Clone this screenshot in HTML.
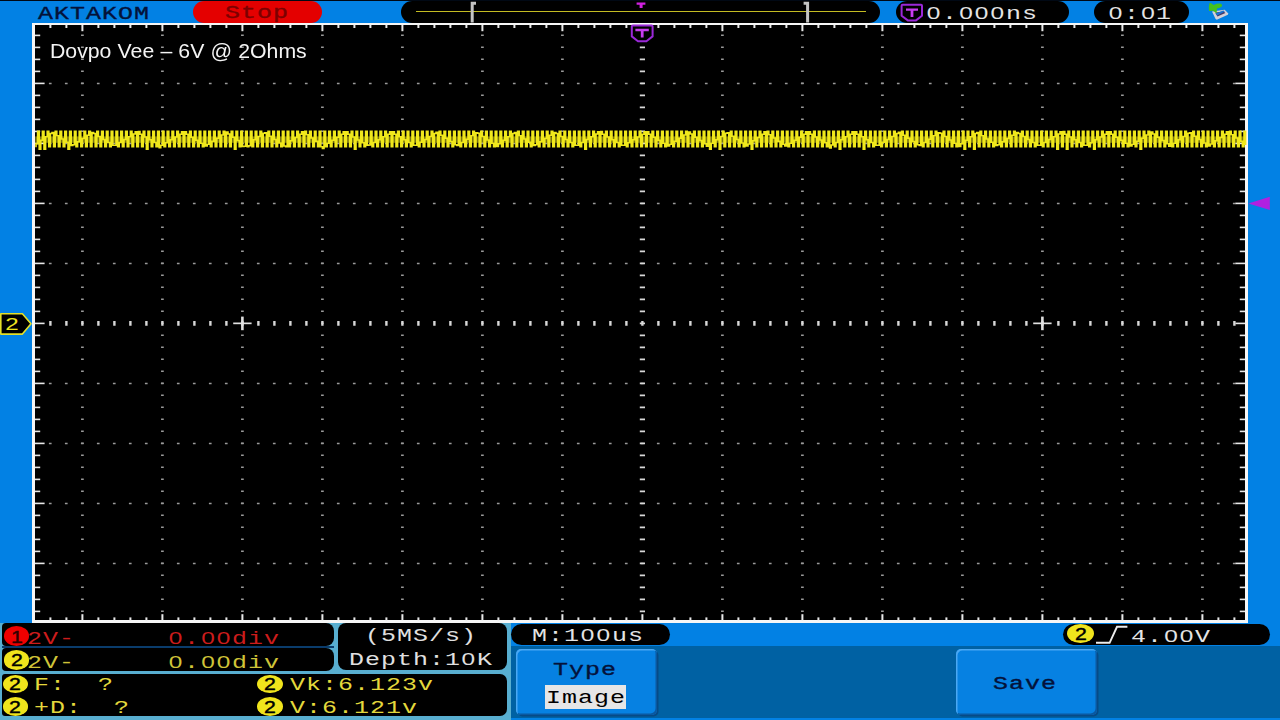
<!DOCTYPE html>
<html lang="en"><head><meta charset="utf-8"><title>Dovpo Vee 6V @ 2Ohms</title>
<style>
html,body{margin:0;padding:0;background:#0281e4;}
body{width:1280px;height:720px;overflow:hidden;position:relative;font-family:"Liberation Mono",monospace;}
.abs{position:absolute;}
.pill{position:absolute;background:#000;border-radius:11px;}
.t{position:absolute;white-space:pre;font-family:"Liberation Mono",monospace;font-size:19.2px;line-height:20px;height:20px;letter-spacing:0.79px;transform-origin:0 0;transform:scaleX(1.3);}
.z{display:inline-block;width:11.52px;text-align:center;font-family:"Liberation Sans",sans-serif;font-size:17.4px;line-height:12px;letter-spacing:0;margin-right:0.79px;transform:scaleX(1.08);}
.ttl{will-change:transform;transform-origin:0 0;transform:scaleX(1.012);position:absolute;white-space:pre;font-family:"Liberation Sans",sans-serif;font-size:21px;line-height:24px;color:#f4f4f4;top:38.6px;}
.num{position:absolute;font-family:"Liberation Sans",sans-serif;font-size:17px;line-height:20px;width:26px;text-align:center;color:#000;transform-origin:50% 50%;transform:scaleX(1.25);-webkit-text-stroke:0.4px currentColor;}
.circ{position:absolute;border-radius:50%;}
.btn{position:absolute;background:#0681e2;border-radius:5px;box-shadow:inset 1.5px 1.5px 0 #4aa8f4, inset -1.5px -1.5px 0 #0a58a0, 1.5px 1.5px 0 #064a86;}
</style></head>
<body>
<div class="abs" style="left:0;top:0;width:1280px;height:1.3px;background:#000814"></div>
<div class="t" style="left:37.5px;top:3.6px;color:#04123a;-webkit-text-stroke:0.35px #04123a;">AKTAKOM</div>
<div class="pill" style="left:192.5px;top:1.2px;width:129px;height:21.4px;background:#e40000"></div>
<div class="t" style="left:224.5px;top:2.7px;color:#7c0000;-webkit-text-stroke:0.35px #7c0000;">Stop</div>
<div class="pill" style="left:401px;top:0.8px;width:479px;height:21.8px"></div>
<div class="abs" style="left:416px;top:10.5px;width:450px;height:1.7px;background:#c4bc22"></div>
<svg class="abs" style="left:0;top:0" width="1280" height="24" viewBox="0 0 1280 24"><path d="M476 3.2 H472.2 V22.6" fill="none" stroke="#c4c4c4" stroke-width="3"/><path d="M803.6 3.2 H807.6 V22.6" fill="none" stroke="#c4c4c4" stroke-width="3"/><path d="M636.6 2.4 H645.4 V4.8 H642.6 V8 H639.6 V4.8 H636.6 Z" fill="#d020e0"/></svg>
<div class="pill" style="left:895.5px;top:0.8px;width:173.5px;height:21.8px"></div>
<svg class="abs" style="left:899px;top:2px" width="26" height="21" viewBox="0 0 26 21"><path d="M3.6 2.8 H22 Q23 2.8 23 3.8 V13.8 L17 18.4 H8.8 L2.6 13.8 V3.8 Q2.6 2.8 3.6 2.8 Z" fill="#000" stroke="#9a28d8" stroke-width="2" stroke-linejoin="round"/><path d="M7 6.4 H19 V8.8 H14.4 V15 H11.6 V8.8 H7 Z" fill="#c83cf0"/></svg>
<div class="t" style="left:926.4px;top:3.7px;color:#e4e4e4;"><span class="z">0</span>.<span class="z">0</span><span class="z">0</span><span class="z">0</span>ns</div>
<div class="pill" style="left:1093.5px;top:0.8px;width:95px;height:21.8px"></div>
<div class="t" style="left:1108.4px;top:3.7px;color:#e4e4e4;"><span class="z">0</span>:<span class="z">0</span>1</div>
<svg class="abs" style="left:1204px;top:0" width="30" height="23" viewBox="0 0 30 23"><path d="M8 11.4 L20.6 9.8 L24.4 13.4 L23.8 14.8 L12.8 19.8 L11.6 19 Z" fill="#d4d0d8"/><path d="M11.2 12.6 L19.6 11.4 L21.4 13 L13.4 16.6 Z" fill="#46386a"/><path d="M11.4 13.4 L19.4 10.4 L20.8 11.6 L13.2 15.4 Z" fill="#1a74d0"/><path d="M5.4 3.2 Q6.4 2.4 7.6 3.6 L9.6 5 Q13 3.4 16 3.6 Q18.6 4.2 18 6.2 Q16 8.2 13 8.6 L12.6 13.2 L9 10.8 L5 11 Q4.4 7 5.4 3.2 Z" fill="#44c01c"/></svg>
<div class="abs" style="left:32.2px;top:23px;width:1215.8px;height:600px;background:#f6f6f6"></div>
<div class="abs" style="left:35.2px;top:25.2px;width:1209.6px;height:595.2px;background:#000"></div>
<svg class="abs" style="left:0;top:0" width="1280" height="720" viewBox="0 0 1280 720">
<line x1="48.9" y1="83.4" x2="1244" y2="83.4" stroke="#9a9a9a" stroke-width="1.45" stroke-dasharray="2.7 13.3"/>
<line x1="48.9" y1="143.4" x2="1244" y2="143.4" stroke="#9a9a9a" stroke-width="1.45" stroke-dasharray="2.7 13.3"/>
<line x1="48.9" y1="203.4" x2="1244" y2="203.4" stroke="#9a9a9a" stroke-width="1.45" stroke-dasharray="2.7 13.3"/>
<line x1="48.9" y1="263.4" x2="1244" y2="263.4" stroke="#9a9a9a" stroke-width="1.45" stroke-dasharray="2.7 13.3"/>
<line x1="48.9" y1="383.4" x2="1244" y2="383.4" stroke="#9a9a9a" stroke-width="1.45" stroke-dasharray="2.7 13.3"/>
<line x1="48.9" y1="443.4" x2="1244" y2="443.4" stroke="#9a9a9a" stroke-width="1.45" stroke-dasharray="2.7 13.3"/>
<line x1="48.9" y1="503.4" x2="1244" y2="503.4" stroke="#9a9a9a" stroke-width="1.45" stroke-dasharray="2.7 13.3"/>
<line x1="48.9" y1="563.4" x2="1244" y2="563.4" stroke="#9a9a9a" stroke-width="1.45" stroke-dasharray="2.7 13.3"/>
<line x1="82.4" y1="34.6" x2="82.4" y2="619" stroke="#9a9a9a" stroke-width="2.7" stroke-dasharray="1.45 10.55"/>
<line x1="162.4" y1="34.6" x2="162.4" y2="619" stroke="#9a9a9a" stroke-width="2.7" stroke-dasharray="1.45 10.55"/>
<line x1="242.4" y1="34.6" x2="242.4" y2="619" stroke="#9a9a9a" stroke-width="2.7" stroke-dasharray="1.45 10.55"/>
<line x1="322.4" y1="34.6" x2="322.4" y2="619" stroke="#9a9a9a" stroke-width="2.7" stroke-dasharray="1.45 10.55"/>
<line x1="402.4" y1="34.6" x2="402.4" y2="619" stroke="#9a9a9a" stroke-width="2.7" stroke-dasharray="1.45 10.55"/>
<line x1="482.4" y1="34.6" x2="482.4" y2="619" stroke="#9a9a9a" stroke-width="2.7" stroke-dasharray="1.45 10.55"/>
<line x1="562.4" y1="34.6" x2="562.4" y2="619" stroke="#9a9a9a" stroke-width="2.7" stroke-dasharray="1.45 10.55"/>
<line x1="722.4" y1="34.6" x2="722.4" y2="619" stroke="#9a9a9a" stroke-width="2.7" stroke-dasharray="1.45 10.55"/>
<line x1="802.4" y1="34.6" x2="802.4" y2="619" stroke="#9a9a9a" stroke-width="2.7" stroke-dasharray="1.45 10.55"/>
<line x1="882.4" y1="34.6" x2="882.4" y2="619" stroke="#9a9a9a" stroke-width="2.7" stroke-dasharray="1.45 10.55"/>
<line x1="962.4" y1="34.6" x2="962.4" y2="619" stroke="#9a9a9a" stroke-width="2.7" stroke-dasharray="1.45 10.55"/>
<line x1="1042.4" y1="34.6" x2="1042.4" y2="619" stroke="#9a9a9a" stroke-width="2.7" stroke-dasharray="1.45 10.55"/>
<line x1="1122.4" y1="34.6" x2="1122.4" y2="619" stroke="#9a9a9a" stroke-width="2.7" stroke-dasharray="1.45 10.55"/>
<line x1="1202.4" y1="34.6" x2="1202.4" y2="619" stroke="#9a9a9a" stroke-width="2.7" stroke-dasharray="1.45 10.55"/>
<line x1="642.4" y1="34.5" x2="642.4" y2="619" stroke="#d8d8d8" stroke-width="5.2" stroke-dasharray="1.7 10.3"/>
<line x1="49.2" y1="323.4" x2="1244" y2="323.4" stroke="#d8d8d8" stroke-width="4.6" stroke-dasharray="2.4 13.6"/>
<rect x="49.4" y="25" width="2" height="3.0" fill="#e8e8e8"/>
<rect x="49.4" y="617.4" width="2" height="3.0" fill="#e8e8e8"/>
<rect x="65.4" y="25" width="2" height="3.0" fill="#e8e8e8"/>
<rect x="65.4" y="617.4" width="2" height="3.0" fill="#e8e8e8"/>
<rect x="81.4" y="25" width="2" height="6.2" fill="#e8e8e8"/>
<rect x="81.4" y="614.2" width="2" height="6.2" fill="#e8e8e8"/>
<rect x="97.4" y="25" width="2" height="3.0" fill="#e8e8e8"/>
<rect x="97.4" y="617.4" width="2" height="3.0" fill="#e8e8e8"/>
<rect x="113.4" y="25" width="2" height="3.0" fill="#e8e8e8"/>
<rect x="113.4" y="617.4" width="2" height="3.0" fill="#e8e8e8"/>
<rect x="129.4" y="25" width="2" height="3.0" fill="#e8e8e8"/>
<rect x="129.4" y="617.4" width="2" height="3.0" fill="#e8e8e8"/>
<rect x="145.4" y="25" width="2" height="3.0" fill="#e8e8e8"/>
<rect x="145.4" y="617.4" width="2" height="3.0" fill="#e8e8e8"/>
<rect x="161.4" y="25" width="2" height="6.2" fill="#e8e8e8"/>
<rect x="161.4" y="614.2" width="2" height="6.2" fill="#e8e8e8"/>
<rect x="177.4" y="25" width="2" height="3.0" fill="#e8e8e8"/>
<rect x="177.4" y="617.4" width="2" height="3.0" fill="#e8e8e8"/>
<rect x="193.4" y="25" width="2" height="3.0" fill="#e8e8e8"/>
<rect x="193.4" y="617.4" width="2" height="3.0" fill="#e8e8e8"/>
<rect x="209.4" y="25" width="2" height="3.0" fill="#e8e8e8"/>
<rect x="209.4" y="617.4" width="2" height="3.0" fill="#e8e8e8"/>
<rect x="225.4" y="25" width="2" height="3.0" fill="#e8e8e8"/>
<rect x="225.4" y="617.4" width="2" height="3.0" fill="#e8e8e8"/>
<rect x="241.4" y="25" width="2" height="6.2" fill="#e8e8e8"/>
<rect x="241.4" y="614.2" width="2" height="6.2" fill="#e8e8e8"/>
<rect x="257.4" y="25" width="2" height="3.0" fill="#e8e8e8"/>
<rect x="257.4" y="617.4" width="2" height="3.0" fill="#e8e8e8"/>
<rect x="273.4" y="25" width="2" height="3.0" fill="#e8e8e8"/>
<rect x="273.4" y="617.4" width="2" height="3.0" fill="#e8e8e8"/>
<rect x="289.4" y="25" width="2" height="3.0" fill="#e8e8e8"/>
<rect x="289.4" y="617.4" width="2" height="3.0" fill="#e8e8e8"/>
<rect x="305.4" y="25" width="2" height="3.0" fill="#e8e8e8"/>
<rect x="305.4" y="617.4" width="2" height="3.0" fill="#e8e8e8"/>
<rect x="321.4" y="25" width="2" height="6.2" fill="#e8e8e8"/>
<rect x="321.4" y="614.2" width="2" height="6.2" fill="#e8e8e8"/>
<rect x="337.4" y="25" width="2" height="3.0" fill="#e8e8e8"/>
<rect x="337.4" y="617.4" width="2" height="3.0" fill="#e8e8e8"/>
<rect x="353.4" y="25" width="2" height="3.0" fill="#e8e8e8"/>
<rect x="353.4" y="617.4" width="2" height="3.0" fill="#e8e8e8"/>
<rect x="369.4" y="25" width="2" height="3.0" fill="#e8e8e8"/>
<rect x="369.4" y="617.4" width="2" height="3.0" fill="#e8e8e8"/>
<rect x="385.4" y="25" width="2" height="3.0" fill="#e8e8e8"/>
<rect x="385.4" y="617.4" width="2" height="3.0" fill="#e8e8e8"/>
<rect x="401.4" y="25" width="2" height="6.2" fill="#e8e8e8"/>
<rect x="401.4" y="614.2" width="2" height="6.2" fill="#e8e8e8"/>
<rect x="417.4" y="25" width="2" height="3.0" fill="#e8e8e8"/>
<rect x="417.4" y="617.4" width="2" height="3.0" fill="#e8e8e8"/>
<rect x="433.4" y="25" width="2" height="3.0" fill="#e8e8e8"/>
<rect x="433.4" y="617.4" width="2" height="3.0" fill="#e8e8e8"/>
<rect x="449.4" y="25" width="2" height="3.0" fill="#e8e8e8"/>
<rect x="449.4" y="617.4" width="2" height="3.0" fill="#e8e8e8"/>
<rect x="465.4" y="25" width="2" height="3.0" fill="#e8e8e8"/>
<rect x="465.4" y="617.4" width="2" height="3.0" fill="#e8e8e8"/>
<rect x="481.4" y="25" width="2" height="6.2" fill="#e8e8e8"/>
<rect x="481.4" y="614.2" width="2" height="6.2" fill="#e8e8e8"/>
<rect x="497.4" y="25" width="2" height="3.0" fill="#e8e8e8"/>
<rect x="497.4" y="617.4" width="2" height="3.0" fill="#e8e8e8"/>
<rect x="513.4" y="25" width="2" height="3.0" fill="#e8e8e8"/>
<rect x="513.4" y="617.4" width="2" height="3.0" fill="#e8e8e8"/>
<rect x="529.4" y="25" width="2" height="3.0" fill="#e8e8e8"/>
<rect x="529.4" y="617.4" width="2" height="3.0" fill="#e8e8e8"/>
<rect x="545.4" y="25" width="2" height="3.0" fill="#e8e8e8"/>
<rect x="545.4" y="617.4" width="2" height="3.0" fill="#e8e8e8"/>
<rect x="561.4" y="25" width="2" height="6.2" fill="#e8e8e8"/>
<rect x="561.4" y="614.2" width="2" height="6.2" fill="#e8e8e8"/>
<rect x="577.4" y="25" width="2" height="3.0" fill="#e8e8e8"/>
<rect x="577.4" y="617.4" width="2" height="3.0" fill="#e8e8e8"/>
<rect x="593.4" y="25" width="2" height="3.0" fill="#e8e8e8"/>
<rect x="593.4" y="617.4" width="2" height="3.0" fill="#e8e8e8"/>
<rect x="609.4" y="25" width="2" height="3.0" fill="#e8e8e8"/>
<rect x="609.4" y="617.4" width="2" height="3.0" fill="#e8e8e8"/>
<rect x="625.4" y="25" width="2" height="3.0" fill="#e8e8e8"/>
<rect x="625.4" y="617.4" width="2" height="3.0" fill="#e8e8e8"/>
<rect x="641.4" y="25" width="2" height="6.2" fill="#e8e8e8"/>
<rect x="641.4" y="614.2" width="2" height="6.2" fill="#e8e8e8"/>
<rect x="657.4" y="25" width="2" height="3.0" fill="#e8e8e8"/>
<rect x="657.4" y="617.4" width="2" height="3.0" fill="#e8e8e8"/>
<rect x="673.4" y="25" width="2" height="3.0" fill="#e8e8e8"/>
<rect x="673.4" y="617.4" width="2" height="3.0" fill="#e8e8e8"/>
<rect x="689.4" y="25" width="2" height="3.0" fill="#e8e8e8"/>
<rect x="689.4" y="617.4" width="2" height="3.0" fill="#e8e8e8"/>
<rect x="705.4" y="25" width="2" height="3.0" fill="#e8e8e8"/>
<rect x="705.4" y="617.4" width="2" height="3.0" fill="#e8e8e8"/>
<rect x="721.4" y="25" width="2" height="6.2" fill="#e8e8e8"/>
<rect x="721.4" y="614.2" width="2" height="6.2" fill="#e8e8e8"/>
<rect x="737.4" y="25" width="2" height="3.0" fill="#e8e8e8"/>
<rect x="737.4" y="617.4" width="2" height="3.0" fill="#e8e8e8"/>
<rect x="753.4" y="25" width="2" height="3.0" fill="#e8e8e8"/>
<rect x="753.4" y="617.4" width="2" height="3.0" fill="#e8e8e8"/>
<rect x="769.4" y="25" width="2" height="3.0" fill="#e8e8e8"/>
<rect x="769.4" y="617.4" width="2" height="3.0" fill="#e8e8e8"/>
<rect x="785.4" y="25" width="2" height="3.0" fill="#e8e8e8"/>
<rect x="785.4" y="617.4" width="2" height="3.0" fill="#e8e8e8"/>
<rect x="801.4" y="25" width="2" height="6.2" fill="#e8e8e8"/>
<rect x="801.4" y="614.2" width="2" height="6.2" fill="#e8e8e8"/>
<rect x="817.4" y="25" width="2" height="3.0" fill="#e8e8e8"/>
<rect x="817.4" y="617.4" width="2" height="3.0" fill="#e8e8e8"/>
<rect x="833.4" y="25" width="2" height="3.0" fill="#e8e8e8"/>
<rect x="833.4" y="617.4" width="2" height="3.0" fill="#e8e8e8"/>
<rect x="849.4" y="25" width="2" height="3.0" fill="#e8e8e8"/>
<rect x="849.4" y="617.4" width="2" height="3.0" fill="#e8e8e8"/>
<rect x="865.4" y="25" width="2" height="3.0" fill="#e8e8e8"/>
<rect x="865.4" y="617.4" width="2" height="3.0" fill="#e8e8e8"/>
<rect x="881.4" y="25" width="2" height="6.2" fill="#e8e8e8"/>
<rect x="881.4" y="614.2" width="2" height="6.2" fill="#e8e8e8"/>
<rect x="897.4" y="25" width="2" height="3.0" fill="#e8e8e8"/>
<rect x="897.4" y="617.4" width="2" height="3.0" fill="#e8e8e8"/>
<rect x="913.4" y="25" width="2" height="3.0" fill="#e8e8e8"/>
<rect x="913.4" y="617.4" width="2" height="3.0" fill="#e8e8e8"/>
<rect x="929.4" y="25" width="2" height="3.0" fill="#e8e8e8"/>
<rect x="929.4" y="617.4" width="2" height="3.0" fill="#e8e8e8"/>
<rect x="945.4" y="25" width="2" height="3.0" fill="#e8e8e8"/>
<rect x="945.4" y="617.4" width="2" height="3.0" fill="#e8e8e8"/>
<rect x="961.4" y="25" width="2" height="6.2" fill="#e8e8e8"/>
<rect x="961.4" y="614.2" width="2" height="6.2" fill="#e8e8e8"/>
<rect x="977.4" y="25" width="2" height="3.0" fill="#e8e8e8"/>
<rect x="977.4" y="617.4" width="2" height="3.0" fill="#e8e8e8"/>
<rect x="993.4" y="25" width="2" height="3.0" fill="#e8e8e8"/>
<rect x="993.4" y="617.4" width="2" height="3.0" fill="#e8e8e8"/>
<rect x="1009.4" y="25" width="2" height="3.0" fill="#e8e8e8"/>
<rect x="1009.4" y="617.4" width="2" height="3.0" fill="#e8e8e8"/>
<rect x="1025.4" y="25" width="2" height="3.0" fill="#e8e8e8"/>
<rect x="1025.4" y="617.4" width="2" height="3.0" fill="#e8e8e8"/>
<rect x="1041.4" y="25" width="2" height="6.2" fill="#e8e8e8"/>
<rect x="1041.4" y="614.2" width="2" height="6.2" fill="#e8e8e8"/>
<rect x="1057.4" y="25" width="2" height="3.0" fill="#e8e8e8"/>
<rect x="1057.4" y="617.4" width="2" height="3.0" fill="#e8e8e8"/>
<rect x="1073.4" y="25" width="2" height="3.0" fill="#e8e8e8"/>
<rect x="1073.4" y="617.4" width="2" height="3.0" fill="#e8e8e8"/>
<rect x="1089.4" y="25" width="2" height="3.0" fill="#e8e8e8"/>
<rect x="1089.4" y="617.4" width="2" height="3.0" fill="#e8e8e8"/>
<rect x="1105.4" y="25" width="2" height="3.0" fill="#e8e8e8"/>
<rect x="1105.4" y="617.4" width="2" height="3.0" fill="#e8e8e8"/>
<rect x="1121.4" y="25" width="2" height="6.2" fill="#e8e8e8"/>
<rect x="1121.4" y="614.2" width="2" height="6.2" fill="#e8e8e8"/>
<rect x="1137.4" y="25" width="2" height="3.0" fill="#e8e8e8"/>
<rect x="1137.4" y="617.4" width="2" height="3.0" fill="#e8e8e8"/>
<rect x="1153.4" y="25" width="2" height="3.0" fill="#e8e8e8"/>
<rect x="1153.4" y="617.4" width="2" height="3.0" fill="#e8e8e8"/>
<rect x="1169.4" y="25" width="2" height="3.0" fill="#e8e8e8"/>
<rect x="1169.4" y="617.4" width="2" height="3.0" fill="#e8e8e8"/>
<rect x="1185.4" y="25" width="2" height="3.0" fill="#e8e8e8"/>
<rect x="1185.4" y="617.4" width="2" height="3.0" fill="#e8e8e8"/>
<rect x="1201.4" y="25" width="2" height="6.2" fill="#e8e8e8"/>
<rect x="1201.4" y="614.2" width="2" height="6.2" fill="#e8e8e8"/>
<rect x="1217.4" y="25" width="2" height="3.0" fill="#e8e8e8"/>
<rect x="1217.4" y="617.4" width="2" height="3.0" fill="#e8e8e8"/>
<rect x="1233.4" y="25" width="2" height="3.0" fill="#e8e8e8"/>
<rect x="1233.4" y="617.4" width="2" height="3.0" fill="#e8e8e8"/>
<rect x="35" y="34.6" width="5.2" height="1.6" fill="#e8e8e8"/>
<rect x="1239.8" y="34.6" width="5.2" height="1.6" fill="#e8e8e8"/>
<rect x="35" y="46.6" width="5.2" height="1.6" fill="#e8e8e8"/>
<rect x="1239.8" y="46.6" width="5.2" height="1.6" fill="#e8e8e8"/>
<rect x="35" y="58.6" width="5.2" height="1.6" fill="#e8e8e8"/>
<rect x="1239.8" y="58.6" width="5.2" height="1.6" fill="#e8e8e8"/>
<rect x="35" y="70.6" width="5.2" height="1.6" fill="#e8e8e8"/>
<rect x="1239.8" y="70.6" width="5.2" height="1.6" fill="#e8e8e8"/>
<rect x="35" y="82.6" width="9.6" height="1.6" fill="#e8e8e8"/>
<rect x="1235.4" y="82.6" width="9.6" height="1.6" fill="#e8e8e8"/>
<rect x="35" y="94.6" width="5.2" height="1.6" fill="#e8e8e8"/>
<rect x="1239.8" y="94.6" width="5.2" height="1.6" fill="#e8e8e8"/>
<rect x="35" y="106.6" width="5.2" height="1.6" fill="#e8e8e8"/>
<rect x="1239.8" y="106.6" width="5.2" height="1.6" fill="#e8e8e8"/>
<rect x="35" y="118.6" width="5.2" height="1.6" fill="#e8e8e8"/>
<rect x="1239.8" y="118.6" width="5.2" height="1.6" fill="#e8e8e8"/>
<rect x="35" y="130.6" width="5.2" height="1.6" fill="#e8e8e8"/>
<rect x="1239.8" y="130.6" width="5.2" height="1.6" fill="#e8e8e8"/>
<rect x="35" y="142.6" width="9.6" height="1.6" fill="#e8e8e8"/>
<rect x="1235.4" y="142.6" width="9.6" height="1.6" fill="#e8e8e8"/>
<rect x="35" y="154.6" width="5.2" height="1.6" fill="#e8e8e8"/>
<rect x="1239.8" y="154.6" width="5.2" height="1.6" fill="#e8e8e8"/>
<rect x="35" y="166.6" width="5.2" height="1.6" fill="#e8e8e8"/>
<rect x="1239.8" y="166.6" width="5.2" height="1.6" fill="#e8e8e8"/>
<rect x="35" y="178.6" width="5.2" height="1.6" fill="#e8e8e8"/>
<rect x="1239.8" y="178.6" width="5.2" height="1.6" fill="#e8e8e8"/>
<rect x="35" y="190.6" width="5.2" height="1.6" fill="#e8e8e8"/>
<rect x="1239.8" y="190.6" width="5.2" height="1.6" fill="#e8e8e8"/>
<rect x="35" y="202.6" width="9.6" height="1.6" fill="#e8e8e8"/>
<rect x="1235.4" y="202.6" width="9.6" height="1.6" fill="#e8e8e8"/>
<rect x="35" y="214.6" width="5.2" height="1.6" fill="#e8e8e8"/>
<rect x="1239.8" y="214.6" width="5.2" height="1.6" fill="#e8e8e8"/>
<rect x="35" y="226.6" width="5.2" height="1.6" fill="#e8e8e8"/>
<rect x="1239.8" y="226.6" width="5.2" height="1.6" fill="#e8e8e8"/>
<rect x="35" y="238.6" width="5.2" height="1.6" fill="#e8e8e8"/>
<rect x="1239.8" y="238.6" width="5.2" height="1.6" fill="#e8e8e8"/>
<rect x="35" y="250.6" width="5.2" height="1.6" fill="#e8e8e8"/>
<rect x="1239.8" y="250.6" width="5.2" height="1.6" fill="#e8e8e8"/>
<rect x="35" y="262.6" width="9.6" height="1.6" fill="#e8e8e8"/>
<rect x="1235.4" y="262.6" width="9.6" height="1.6" fill="#e8e8e8"/>
<rect x="35" y="274.6" width="5.2" height="1.6" fill="#e8e8e8"/>
<rect x="1239.8" y="274.6" width="5.2" height="1.6" fill="#e8e8e8"/>
<rect x="35" y="286.6" width="5.2" height="1.6" fill="#e8e8e8"/>
<rect x="1239.8" y="286.6" width="5.2" height="1.6" fill="#e8e8e8"/>
<rect x="35" y="298.6" width="5.2" height="1.6" fill="#e8e8e8"/>
<rect x="1239.8" y="298.6" width="5.2" height="1.6" fill="#e8e8e8"/>
<rect x="35" y="310.6" width="5.2" height="1.6" fill="#e8e8e8"/>
<rect x="1239.8" y="310.6" width="5.2" height="1.6" fill="#e8e8e8"/>
<rect x="35" y="322.6" width="9.6" height="1.6" fill="#e8e8e8"/>
<rect x="1235.4" y="322.6" width="9.6" height="1.6" fill="#e8e8e8"/>
<rect x="35" y="334.6" width="5.2" height="1.6" fill="#e8e8e8"/>
<rect x="1239.8" y="334.6" width="5.2" height="1.6" fill="#e8e8e8"/>
<rect x="35" y="346.6" width="5.2" height="1.6" fill="#e8e8e8"/>
<rect x="1239.8" y="346.6" width="5.2" height="1.6" fill="#e8e8e8"/>
<rect x="35" y="358.6" width="5.2" height="1.6" fill="#e8e8e8"/>
<rect x="1239.8" y="358.6" width="5.2" height="1.6" fill="#e8e8e8"/>
<rect x="35" y="370.6" width="5.2" height="1.6" fill="#e8e8e8"/>
<rect x="1239.8" y="370.6" width="5.2" height="1.6" fill="#e8e8e8"/>
<rect x="35" y="382.6" width="9.6" height="1.6" fill="#e8e8e8"/>
<rect x="1235.4" y="382.6" width="9.6" height="1.6" fill="#e8e8e8"/>
<rect x="35" y="394.6" width="5.2" height="1.6" fill="#e8e8e8"/>
<rect x="1239.8" y="394.6" width="5.2" height="1.6" fill="#e8e8e8"/>
<rect x="35" y="406.6" width="5.2" height="1.6" fill="#e8e8e8"/>
<rect x="1239.8" y="406.6" width="5.2" height="1.6" fill="#e8e8e8"/>
<rect x="35" y="418.6" width="5.2" height="1.6" fill="#e8e8e8"/>
<rect x="1239.8" y="418.6" width="5.2" height="1.6" fill="#e8e8e8"/>
<rect x="35" y="430.6" width="5.2" height="1.6" fill="#e8e8e8"/>
<rect x="1239.8" y="430.6" width="5.2" height="1.6" fill="#e8e8e8"/>
<rect x="35" y="442.6" width="9.6" height="1.6" fill="#e8e8e8"/>
<rect x="1235.4" y="442.6" width="9.6" height="1.6" fill="#e8e8e8"/>
<rect x="35" y="454.6" width="5.2" height="1.6" fill="#e8e8e8"/>
<rect x="1239.8" y="454.6" width="5.2" height="1.6" fill="#e8e8e8"/>
<rect x="35" y="466.6" width="5.2" height="1.6" fill="#e8e8e8"/>
<rect x="1239.8" y="466.6" width="5.2" height="1.6" fill="#e8e8e8"/>
<rect x="35" y="478.6" width="5.2" height="1.6" fill="#e8e8e8"/>
<rect x="1239.8" y="478.6" width="5.2" height="1.6" fill="#e8e8e8"/>
<rect x="35" y="490.6" width="5.2" height="1.6" fill="#e8e8e8"/>
<rect x="1239.8" y="490.6" width="5.2" height="1.6" fill="#e8e8e8"/>
<rect x="35" y="502.6" width="9.6" height="1.6" fill="#e8e8e8"/>
<rect x="1235.4" y="502.6" width="9.6" height="1.6" fill="#e8e8e8"/>
<rect x="35" y="514.6" width="5.2" height="1.6" fill="#e8e8e8"/>
<rect x="1239.8" y="514.6" width="5.2" height="1.6" fill="#e8e8e8"/>
<rect x="35" y="526.6" width="5.2" height="1.6" fill="#e8e8e8"/>
<rect x="1239.8" y="526.6" width="5.2" height="1.6" fill="#e8e8e8"/>
<rect x="35" y="538.6" width="5.2" height="1.6" fill="#e8e8e8"/>
<rect x="1239.8" y="538.6" width="5.2" height="1.6" fill="#e8e8e8"/>
<rect x="35" y="550.6" width="5.2" height="1.6" fill="#e8e8e8"/>
<rect x="1239.8" y="550.6" width="5.2" height="1.6" fill="#e8e8e8"/>
<rect x="35" y="562.6" width="9.6" height="1.6" fill="#e8e8e8"/>
<rect x="1235.4" y="562.6" width="9.6" height="1.6" fill="#e8e8e8"/>
<rect x="35" y="574.6" width="5.2" height="1.6" fill="#e8e8e8"/>
<rect x="1239.8" y="574.6" width="5.2" height="1.6" fill="#e8e8e8"/>
<rect x="35" y="586.6" width="5.2" height="1.6" fill="#e8e8e8"/>
<rect x="1239.8" y="586.6" width="5.2" height="1.6" fill="#e8e8e8"/>
<rect x="35" y="598.6" width="5.2" height="1.6" fill="#e8e8e8"/>
<rect x="1239.8" y="598.6" width="5.2" height="1.6" fill="#e8e8e8"/>
<rect x="35" y="610.6" width="5.2" height="1.6" fill="#e8e8e8"/>
<rect x="1239.8" y="610.6" width="5.2" height="1.6" fill="#e8e8e8"/>
<rect x="233.2" y="322.5" width="18.4" height="1.7" fill="#e0e0e0"/>
<rect x="241.1" y="316.6" width="2.6" height="13.6" fill="#e0e0e0"/>
<rect x="1033.2" y="322.5" width="18.4" height="1.7" fill="#e0e0e0"/>
<rect x="1041.1" y="316.6" width="2.6" height="13.6" fill="#e0e0e0"/>
<path d="M36.0 142.9V147.2M37.6 130.6V144.4M39.2 130.6V150.1M40.8 139.5V150.1M42.4 130.6V141.0M44.0 130.6V150.1M45.6 136.1V150.1M47.2 130.6V137.6M48.8 130.6V147.5M50.4 132.8V147.5M52.0 131.7V134.3M53.6 131.7V147.5M55.2 130.6V147.5M56.8 130.6V136.4M58.4 134.9V147.5M60.0 130.6V147.5M61.6 130.6V139.7M63.2 138.2V147.5M64.8 130.6V147.5M66.4 130.6V143.1M68.0 141.6V150.1M69.6 130.6V150.1M71.2 130.6V146.2M72.8 144.1V146.2M74.4 130.6V145.6M76.0 130.6V147.5M77.6 141.0V147.5M79.2 130.6V142.5M80.8 130.6V147.5M82.4 137.7V147.5M84.0 130.6V139.2M85.6 130.6V147.5M87.2 134.6V147.5M88.8 130.6V136.1M90.4 130.6V147.5M92.0 131.7V147.5M93.6 131.7V134.2M95.2 132.7V147.5M96.8 130.6V147.5M98.4 130.6V137.2M100.0 135.7V147.5M101.6 130.6V147.5M103.2 130.6V140.2M104.8 138.7V147.5M106.4 130.6V147.5M108.0 130.6V143.2M109.6 141.7V147.5M111.2 130.6V147.5M112.8 130.6V145.9M114.4 144.4V145.9M116.0 130.6V145.9M117.6 130.6V147.5M119.2 141.7V147.5M120.8 130.6V143.2M122.4 130.6V147.5M124.0 138.8V147.5M125.6 130.6V140.3M127.2 130.6V147.5M128.8 136.0V147.5M130.4 130.6V137.5M132.0 130.6V147.5M133.6 133.3V147.5M135.2 131.1V134.8M136.8 131.1V147.5M138.4 130.8V147.5M140.0 130.8V135.1M141.6 133.6V147.5M143.2 130.6V147.5M144.8 130.6V137.8M146.4 136.3V150.1M148.0 130.6V150.1M149.6 130.6V140.6M151.2 139.1V147.5M152.8 130.6V147.5M154.4 130.6V143.3M156.0 141.8V147.5M157.6 130.6V147.5M159.2 130.6V148.5M160.8 144.5V148.5M162.4 130.6V146.0M164.0 130.6V147.5M165.6 141.9V147.5M167.2 130.6V143.4M168.8 130.6V147.5M170.4 139.1V147.5M172.0 130.6V140.6M173.6 130.6V147.5M175.2 136.2V147.5M176.8 130.6V137.7M178.4 130.6V147.5M180.0 133.5V147.5M181.6 131.0V135.0M183.2 131.0V147.5M184.8 130.9V147.5M186.4 130.9V135.0M188.0 133.5V147.5M189.6 130.6V147.5M191.2 130.6V137.9M192.8 136.4V147.5M194.4 130.6V147.5M196.0 130.6V140.9M197.6 139.4V147.5M199.2 130.6V147.5M200.8 130.6V143.9M202.4 142.4V147.5M204.0 130.6V147.5M205.6 130.6V146.7M207.2 143.6V146.7M208.8 130.6V145.1M210.4 130.6V147.5M212.0 140.6V147.5M213.6 130.6V142.1M215.2 130.6V147.5M216.8 137.4V147.5M218.4 130.6V138.9M220.0 130.6V147.5M221.6 134.2V147.5M223.2 130.6V135.7M224.8 130.6V147.5M226.4 131.3V147.5M228.0 131.3V134.7M229.6 133.2V147.5M231.2 130.6V147.5M232.8 130.6V137.9M234.4 136.4V150.1M236.0 130.6V150.1M237.6 130.6V141.3M239.2 139.8V147.5M240.8 130.6V147.5M242.4 130.6V147.2M244.0 145.6V147.2M245.6 130.6V147.1M247.2 130.6V147.5M248.8 145.1V147.5M250.4 130.6V146.6M252.0 130.6V147.5M253.6 139.1V147.5M255.2 130.6V140.6M256.8 130.6V147.5M258.4 135.7V147.5M260.0 130.6V137.2M261.6 130.6V147.5M263.2 132.4V147.5M264.8 132.1V133.9M266.4 132.1V147.5M268.0 130.6V147.5M269.6 130.6V136.9M271.2 135.4V147.5M272.8 130.6V147.5M274.4 130.6V140.3M276.0 138.8V147.5M277.6 130.6V147.5M279.2 130.6V143.7M280.8 142.2V147.5M282.4 130.6V147.5M284.0 130.6V146.8M285.6 145.3V147.4M287.2 130.6V147.4M288.8 130.6V147.5M290.4 140.0V147.5M292.0 130.6V141.5M293.6 130.6V147.5M295.2 136.7V147.5M296.8 130.6V138.2M298.4 130.6V147.5M300.0 133.4V147.5M301.6 131.1V134.9M303.2 131.1V147.5M304.8 130.6V147.5M306.4 130.6V135.6M308.0 134.1V147.5M309.6 130.6V147.5M311.2 130.6V138.7M312.8 137.2V147.5M314.4 130.6V147.5M316.0 130.6V142.0M317.6 140.5V147.5M319.2 130.6V147.5M320.8 130.6V147.6M322.4 146.1V149.3M324.0 130.6V149.3M325.6 130.6V147.5M327.2 142.4V147.5M328.8 130.6V143.9M330.4 130.6V147.5M332.0 139.4V147.5M333.6 130.6V140.9M335.2 130.6V147.5M336.8 136.4V147.5M338.4 130.6V137.9M340.0 130.6V147.5M341.6 133.5V147.5M343.2 130.9V135.0M344.8 130.9V147.5M346.4 130.9V147.5M348.0 130.9V135.0M349.6 133.5V147.5M351.2 130.6V147.5M352.8 130.6V137.8M354.4 136.3V150.1M356.0 130.6V150.1M357.6 130.6V140.7M359.2 139.2V147.5M360.8 130.6V147.5M362.4 130.6V143.5M364.0 142.0V147.5M365.6 130.6V147.5M367.2 130.6V146.1M368.8 144.3V146.1M370.4 130.6V145.8M372.0 130.6V147.5M373.6 141.7V147.5M375.2 130.6V143.2M376.8 130.6V147.5M378.4 138.9V147.5M380.0 130.6V140.4M381.6 130.6V147.5M383.2 136.1V147.5M384.8 130.6V137.6M386.4 130.6V147.5M388.0 133.5V147.5M389.6 130.9V135.0M391.2 130.9V147.5M392.8 131.0V147.5M394.4 131.0V134.9M396.0 133.4V147.5M397.6 130.6V147.5M399.2 130.6V137.6M400.8 136.1V147.5M402.4 130.6V147.5M404.0 130.6V140.4M405.6 138.9V147.5M407.2 130.6V147.5M408.8 130.6V143.3M410.4 141.8V147.5M412.0 130.6V147.5M413.6 130.6V146.0M415.2 144.4V146.0M416.8 130.6V145.9M418.4 130.6V147.5M420.0 141.6V147.5M421.6 130.6V143.1M423.2 130.6V147.5M424.8 138.7V147.5M426.4 130.6V140.2M428.0 130.6V147.5M429.6 135.7V147.5M431.2 130.6V137.2M432.8 130.6V147.5M434.4 132.8V147.5M436.0 131.6V134.3M437.6 131.6V147.5M439.2 130.6V147.5M440.8 130.6V136.0M442.4 134.5V147.5M444.0 130.6V147.5M445.6 130.6V139.1M447.2 137.6V147.5M448.8 130.6V147.5M450.4 130.6V142.3M452.0 140.8V147.5M453.6 130.6V147.5M455.2 130.6V145.4M456.8 143.9V146.3M458.4 130.6V146.3M460.0 130.6V147.5M461.6 141.8V147.5M463.2 130.6V143.3M464.8 130.6V147.5M466.4 138.5V147.5M468.0 130.6V140.0M469.6 130.6V147.5M471.2 135.1V147.5M472.8 130.6V136.6M474.4 130.6V147.5M476.0 132.0V147.5M477.6 132.0V134.0M479.2 132.5V147.5M480.8 130.6V147.5M482.4 130.6V137.3M484.0 135.8V147.5M485.6 130.6V147.5M487.2 130.6V140.7M488.8 139.2V147.5M490.4 130.6V147.5M492.0 130.6V144.1M493.6 142.6V147.5M495.2 130.6V147.5M496.8 130.6V147.2M498.4 142.9V147.2M500.0 130.6V144.4M501.6 130.6V147.5M503.2 139.5V147.5M504.8 130.6V141.0M506.4 130.6V147.5M508.0 136.1V147.5M509.6 130.6V137.6M511.2 130.6V147.5M512.8 132.8V147.5M514.4 131.7V134.3M516.0 131.7V147.5M517.6 130.6V147.5M519.2 130.6V136.4M520.8 134.9V147.5M522.4 130.6V147.5M524.0 130.6V139.7M525.6 138.2V147.5M527.2 130.6V147.5M528.8 130.6V143.1M530.4 141.6V147.5M532.0 130.6V147.5M533.6 130.6V146.2M535.2 144.1V146.2M536.8 130.6V145.6M538.4 130.6V147.5M540.0 141.0V147.5M541.6 130.6V142.5M543.2 130.6V147.5M544.8 137.7V147.5M546.4 130.6V139.2M548.0 130.6V147.5M549.6 134.6V147.5M551.2 130.6V136.1M552.8 130.6V147.5M554.4 131.7V147.5M556.0 131.7V134.2M557.6 132.7V147.5M559.2 130.6V147.5M560.8 130.6V137.2M562.4 135.7V147.5M564.0 130.6V147.5M565.6 130.6V140.2M567.2 138.7V147.5M568.8 130.6V147.5M570.4 130.6V143.2M572.0 141.7V147.5M573.6 130.6V147.5M575.2 130.6V145.9M576.8 144.4V145.9M578.4 130.6V145.9M580.0 130.6V147.5M581.6 141.7V147.5M583.2 130.6V143.2M584.8 130.6V150.1M586.4 138.8V150.1M588.0 130.6V140.3M589.6 130.6V147.5M591.2 136.0V147.5M592.8 130.6V137.5M594.4 130.6V147.5M596.0 133.3V147.5M597.6 131.1V134.8M599.2 131.1V147.5M600.8 130.8V147.5M602.4 130.8V135.1M604.0 133.6V147.5M605.6 130.6V147.5M607.2 130.6V137.8M608.8 136.3V147.5M610.4 130.6V147.5M612.0 130.6V140.6M613.6 139.1V147.5M615.2 130.6V147.5M616.8 130.6V143.3M618.4 141.8V147.5M620.0 130.6V147.5M621.6 130.6V145.9M623.2 144.4V146.0M624.8 130.6V146.0M626.4 130.6V147.5M628.0 141.9V147.5M629.6 130.6V143.4M631.2 130.6V147.5M632.8 139.1V147.5M634.4 130.6V140.6M636.0 130.6V147.5M637.6 136.2V147.5M639.2 130.6V137.7M640.8 130.6V147.5M642.4 133.5V147.5M644.0 131.0V135.0M645.6 131.0V147.5M647.2 130.9V147.5M648.8 130.9V135.0M650.4 133.5V147.5M652.0 130.6V147.5M653.6 130.6V137.9M655.2 136.4V147.5M656.8 130.6V147.5M658.4 130.6V140.9M660.0 139.4V147.5M661.6 130.6V147.5M663.2 130.6V143.9M664.8 142.4V147.5M666.4 130.6V147.5M668.0 130.6V146.7M669.6 143.6V146.7M671.2 130.6V145.1M672.8 130.6V147.5M674.4 140.6V147.5M676.0 130.6V142.1M677.6 130.6V147.5M679.2 137.4V147.5M680.8 130.6V138.9M682.4 130.6V147.5M684.0 134.2V147.5M685.6 130.6V135.7M687.2 130.6V147.5M688.8 131.3V147.5M690.4 131.3V134.7M692.0 133.2V147.5M693.6 130.6V147.5M695.2 130.6V137.9M696.8 136.4V147.5M698.4 130.6V147.5M700.0 130.6V141.3M701.6 139.8V147.5M703.2 130.6V147.5M704.8 130.6V144.6M706.4 143.1V147.1M708.0 130.6V147.1M709.6 130.6V150.1M711.2 142.5V150.1M712.8 130.6V144.0M714.4 130.6V147.5M716.0 139.1V147.5M717.6 130.6V140.6M719.2 130.6V150.1M720.8 135.7V150.1M722.4 130.6V137.2M724.0 130.6V147.5M725.6 132.4V147.5M727.2 132.1V133.9M728.8 132.1V147.5M730.4 130.6V147.5M732.0 130.6V136.9M733.6 135.4V147.5M735.2 130.6V147.5M736.8 130.6V140.3M738.4 138.8V147.5M740.0 130.6V147.5M741.6 130.6V143.7M743.2 142.2V147.5M744.8 130.6V147.5M746.4 130.6V146.8M748.0 143.3V146.8M749.6 130.6V144.8M751.2 130.6V150.1M752.8 140.1V150.1M754.4 130.6V141.6M756.0 130.6V147.5M757.6 136.7V147.5M759.2 130.6V138.2M760.8 130.6V147.5M762.4 133.4V147.5M764.0 131.1V134.9M765.6 131.1V147.5M767.2 130.6V147.5M768.8 130.6V135.6M770.4 134.1V147.5M772.0 130.6V147.5M773.6 130.6V138.7M775.2 137.2V147.5M776.8 130.6V147.5M778.4 130.6V142.0M780.0 140.5V147.5M781.6 130.6V147.5M783.2 130.6V145.0M784.8 143.5V146.7M786.4 130.6V146.7M788.0 130.6V147.5M789.6 142.4V147.5M791.2 130.6V143.9M792.8 130.6V147.5M794.4 139.4V147.5M796.0 130.6V140.9M797.6 130.6V147.5M799.2 136.4V147.5M800.8 130.6V137.9M802.4 130.6V147.5M804.0 133.5V147.5M805.6 130.9V135.0M807.2 130.9V147.5M808.8 130.9V147.5M810.4 130.9V135.0M812.0 133.5V147.5M813.6 130.6V147.5M815.2 130.6V137.8M816.8 136.3V147.5M818.4 130.6V147.5M820.0 130.6V140.7M821.6 139.2V147.5M823.2 130.6V147.5M824.8 130.6V143.5M826.4 142.0V147.5M828.0 130.6V147.5M829.6 130.6V148.7M831.2 144.3V148.7M832.8 130.6V145.8M834.4 130.6V147.5M836.0 141.7V147.5M837.6 130.6V143.2M839.2 130.6V150.1M840.8 138.9V150.1M842.4 130.6V140.4M844.0 130.6V147.5M845.6 136.1V147.5M847.2 130.6V137.6M848.8 130.6V147.5M850.4 133.5V147.5M852.0 130.9V135.0M853.6 130.9V147.5M855.2 131.0V147.5M856.8 131.0V134.9M858.4 133.4V147.5M860.0 130.6V147.5M861.6 130.6V137.6M863.2 136.1V150.1M864.8 130.6V150.1M866.4 130.6V140.4M868.0 138.9V147.5M869.6 130.6V147.5M871.2 130.6V143.3M872.8 141.8V147.5M874.4 130.6V147.5M876.0 130.6V146.0M877.6 144.4V146.0M879.2 130.6V145.9M880.8 130.6V147.5M882.4 141.6V147.5M884.0 130.6V143.1M885.6 130.6V147.5M887.2 138.7V147.5M888.8 130.6V140.2M890.4 130.6V147.5M892.0 135.7V147.5M893.6 130.6V137.2M895.2 130.6V147.5M896.8 132.8V147.5M898.4 131.6V134.3M900.0 131.6V147.5M901.6 130.6V147.5M903.2 130.6V136.0M904.8 134.5V147.5M906.4 130.6V147.5M908.0 130.6V139.1M909.6 137.6V147.5M911.2 130.6V147.5M912.8 130.6V142.3M914.4 140.8V147.5M916.0 130.6V147.5M917.6 130.6V145.4M919.2 143.9V146.3M920.8 130.6V146.3M922.4 130.6V147.5M924.0 141.8V147.5M925.6 130.6V143.3M927.2 130.6V147.5M928.8 138.5V147.5M930.4 130.6V140.0M932.0 130.6V147.5M933.6 135.1V147.5M935.2 130.6V136.6M936.8 130.6V147.5M938.4 132.0V147.5M940.0 132.0V134.0M941.6 132.5V147.5M943.2 130.6V147.5M944.8 130.6V137.3M946.4 135.8V147.5M948.0 130.6V147.5M949.6 130.6V140.7M951.2 139.2V147.5M952.8 130.6V147.5M954.4 130.6V144.1M956.0 142.6V147.5M957.6 130.6V147.5M959.2 130.6V147.2M960.8 142.9V147.2M962.4 130.6V144.4M964.0 130.6V150.1M965.6 139.5V150.1M967.2 130.6V141.0M968.8 130.6V147.5M970.4 136.1V147.5M972.0 130.6V137.6M973.6 130.6V150.1M975.2 132.8V150.1M976.8 131.7V134.3M978.4 131.7V147.5M980.0 130.6V147.5M981.6 130.6V136.4M983.2 134.9V147.5M984.8 130.6V147.5M986.4 130.6V139.7M988.0 138.2V147.5M989.6 130.6V147.5M991.2 130.6V143.1M992.8 141.6V147.5M994.4 130.6V147.5M996.0 130.6V146.2M997.6 144.1V146.2M999.2 130.6V145.6M1000.8 130.6V147.5M1002.4 141.0V147.5M1004.0 130.6V142.5M1005.6 130.6V147.5M1007.2 137.7V147.5M1008.8 130.6V139.2M1010.4 130.6V147.5M1012.0 134.6V147.5M1013.6 130.6V136.1M1015.2 130.6V147.5M1016.8 131.7V147.5M1018.4 131.7V134.2M1020.0 132.7V147.5M1021.6 130.6V147.5M1023.2 130.6V137.2M1024.8 135.7V147.5M1026.4 130.6V147.5M1028.0 130.6V140.2M1029.6 138.7V147.5M1031.2 130.6V147.5M1032.8 130.6V143.2M1034.4 141.7V147.5M1036.0 130.6V147.5M1037.6 130.6V145.9M1039.2 144.4V145.9M1040.8 130.6V145.9M1042.4 130.6V147.5M1044.0 141.7V147.5M1045.6 130.6V143.2M1047.2 130.6V147.5M1048.8 138.8V147.5M1050.4 130.6V140.3M1052.0 130.6V147.5M1053.6 136.0V147.5M1055.2 130.6V137.5M1056.8 130.6V150.1M1058.4 133.3V150.1M1060.0 131.1V134.8M1061.6 131.1V147.5M1063.2 130.8V147.5M1064.8 130.8V135.1M1066.4 133.6V150.1M1068.0 130.6V150.1M1069.6 130.6V137.8M1071.2 136.3V147.5M1072.8 130.6V147.5M1074.4 130.6V140.6M1076.0 139.1V147.5M1077.6 130.6V147.5M1079.2 130.6V143.3M1080.8 141.8V147.5M1082.4 130.6V147.5M1084.0 130.6V145.9M1085.6 144.4V146.0M1087.2 130.6V146.0M1088.8 130.6V147.5M1090.4 141.9V147.5M1092.0 130.6V143.4M1093.6 130.6V150.1M1095.2 139.1V150.1M1096.8 130.6V140.6M1098.4 130.6V147.5M1100.0 136.2V147.5M1101.6 130.6V137.7M1103.2 130.6V147.5M1104.8 133.5V147.5M1106.4 131.0V135.0M1108.0 131.0V147.5M1109.6 130.9V147.5M1111.2 130.9V135.1M1112.8 133.6V147.5M1114.4 130.6V147.5M1116.0 130.6V137.9M1117.6 136.4V147.5M1119.2 130.6V147.5M1120.8 130.6V140.9M1122.4 139.4V147.5M1124.0 130.6V147.5M1125.6 130.6V143.9M1127.2 142.4V147.5M1128.8 130.6V147.5M1130.4 130.6V146.7M1132.0 143.6V146.7M1133.6 130.6V145.1M1135.2 130.6V147.5M1136.8 140.6V147.5M1138.4 130.6V142.1M1140.0 130.6V150.1M1141.6 137.4V150.1M1143.2 130.6V138.9M1144.8 130.6V147.5M1146.4 134.2V147.5M1148.0 130.6V135.7M1149.6 130.6V147.5M1151.2 131.3V147.5M1152.8 131.3V134.7M1154.4 133.2V147.5M1156.0 130.6V147.5M1157.6 130.6V137.9M1159.2 136.4V147.5M1160.8 130.6V147.5M1162.4 130.6V141.3M1164.0 139.8V147.5M1165.6 130.6V147.5M1167.2 130.6V144.6M1168.8 143.1V147.1M1170.4 130.6V147.1M1172.0 130.6V147.5M1173.6 142.5V147.5M1175.2 130.6V144.0M1176.8 130.6V147.5M1178.4 139.1V147.5M1180.0 130.6V140.6M1181.6 130.6V147.5M1183.2 135.7V147.5M1184.8 130.6V137.2M1186.4 130.6V147.5M1188.0 132.4V147.5M1189.6 132.1V133.9M1191.2 132.1V147.5M1192.8 130.6V147.5M1194.4 130.6V136.9M1196.0 135.4V147.5M1197.6 130.6V147.5M1199.2 130.6V140.3M1200.8 138.8V147.5M1202.4 130.6V147.5M1204.0 130.6V143.7M1205.6 142.2V147.5M1207.2 130.6V147.5M1208.8 130.6V146.8M1210.4 143.3V146.8M1212.0 130.6V144.8M1213.6 130.6V147.5M1215.2 140.1V147.5M1216.8 130.6V141.6M1218.4 130.6V147.5M1220.0 136.7V147.5M1221.6 130.6V138.2M1223.2 130.6V147.5M1224.8 133.4V147.5M1226.4 131.1V134.9M1228.0 131.1V147.5M1229.6 130.6V147.5M1231.2 130.6V135.6M1232.8 134.1V147.5M1234.4 130.6V147.5M1236.0 130.6V138.7M1237.6 137.2V147.5M1239.2 130.6V147.5M1240.8 130.6V142.0M1242.4 140.5V147.5M1244.0 130.6V147.5M1245.6 130.6V145.0" fill="none" stroke="#f0e81c" stroke-width="1.6"/>
<rect x="35.2" y="136.4" width="1209.6" height="6.4" fill="#f0e81c" opacity="0.5"/>
<path d="M633 25.6 H651.6 Q652.6 25.6 652.6 26.6 V36.4 L646.4 41.2 H638 L631.8 36.4 V26.6 Q631.8 25.6 633 25.6 Z" fill="#000" stroke="#9a28d8" stroke-width="2" stroke-linejoin="round"/>
<path d="M635.4 28.8 H648.8 V31.2 H643.6 V37.4 H640.8 V31.2 H635.4 Z" fill="#c83cf0"/>
<path d="M1248.4 203.4 L1269.8 196.8 V210 Z" fill="#b020e0"/>
<path d="M0.8 313.7 H22.4 L31 323.8 L22.4 334.1 H0.8 Z" fill="#000" stroke="#e4e028" stroke-width="1.6" stroke-linejoin="round"/>
</svg>
<div class="num" style="left:-1.2px;top:315.2px;color:#ece420;font-size:17px;transform:scaleX(1.42);-webkit-text-stroke:0">2</div>
<div class="ttl" style="left:49.8px;word-spacing:0.25px">Dovpo Vee – 6V @ 2Ohms</div>
<div class="abs" style="left:0;top:623px;width:511px;height:97px;background:#58aed0"></div>
<div class="abs" style="left:511px;top:645.6px;width:769px;height:72.6px;background:#0061a3"></div>
<div class="abs" style="left:2px;top:623px;width:331.6px;height:23.2px;background:#000;border-radius:4px 8px 8px 4px"></div>
<div class="abs" style="left:2px;top:646.2px;width:331.6px;height:2.3px;background:#0a3c6c"></div>
<div class="abs" style="left:2px;top:648.4px;width:331.6px;height:22.8px;background:#000;border-radius:4px 8px 8px 4px"></div>
<div class="abs" style="left:338px;top:623px;width:168.8px;height:47px;background:#000;border-radius:8px"></div>
<div class="abs" style="left:2px;top:673.6px;width:504.8px;height:42.8px;background:#000;border-radius:3px 7px 7px 3px"></div>
<div class="circ" style="left:3.8px;top:626.3px;width:25.6px;height:19.8px;background:#f00000"></div><div class="num" style="left:3.6px;top:627.6px;color:#300000">1</div>
<div class="t" style="left:27.2px;top:629.1px;color:#cc1c1c;">2V-</div>
<div class="t" style="left:168.4px;top:629.1px;color:#cc1c1c;"><span class="z">0</span>.<span class="z">0</span><span class="z">0</span>div</div>
<div class="circ" style="left:3.8px;top:650.4px;width:25.6px;height:19.2px;background:#f0e41c"></div><div class="num" style="left:3.6px;top:651.4px;color:#000">2</div>
<div class="t" style="left:27.2px;top:653.1px;color:#d0c438;">2V-</div>
<div class="t" style="left:168.4px;top:653.1px;color:#d0c438;"><span class="z">0</span>.<span class="z">0</span><span class="z">0</span>div</div>
<div class="t" style="left:365.0px;top:625.9px;color:#e0e0e0;">(5MS/s)</div>
<div class="t" style="left:348.6px;top:649.9px;color:#e0e0e0;">Depth:1<span class="z">0</span>K</div>
<div class="circ" style="left:2.5px;top:674.6px;width:25.8px;height:18.8px;background:#f0e41c"></div><div class="num" style="left:2.4px;top:675.4px;color:#000">2</div>
<div class="t" style="left:33.6px;top:675.3px;color:#e4d83c;">F:  ?</div>
<div class="circ" style="left:2.5px;top:697.4px;width:25.8px;height:18.6px;background:#f0e41c"></div><div class="num" style="left:2.4px;top:698.1px;color:#000">2</div>
<div class="t" style="left:33.6px;top:698.1px;color:#e4d83c;">+D:  ?</div>
<div class="circ" style="left:256.5px;top:674.6px;width:26.4px;height:18.8px;background:#f0e41c"></div><div class="num" style="left:256.7px;top:675.4px;color:#000">2</div>
<div class="t" style="left:289.6px;top:675.3px;color:#e4d83c;">Vk:6.123v</div>
<div class="circ" style="left:256.5px;top:697.4px;width:26.4px;height:18.6px;background:#f0e41c"></div><div class="num" style="left:256.7px;top:698.1px;color:#000">2</div>
<div class="t" style="left:289.6px;top:698.1px;color:#e4d83c;">V:6.121v</div>
<div class="pill" style="left:510.8px;top:623.6px;width:158.8px;height:21.2px"></div>
<div class="t" style="left:532.2px;top:625.9px;color:#e4e4e4;">M:1<span class="z">0</span><span class="z">0</span>us</div>
<div class="btn" style="left:516.4px;top:649.4px;width:140.6px;height:65.4px"></div>
<div class="t" style="left:553.0px;top:659.5px;color:#04123a;-webkit-text-stroke:0.35px #04123a;">Type</div>
<div class="abs" style="left:545.2px;top:685.4px;width:80.6px;height:23.8px;background:#e6e6e6"></div>
<div class="t" style="left:546.4px;top:688.4px;color:#000;">Image</div>
<div class="btn" style="left:956.4px;top:649.4px;width:140.6px;height:65.4px"></div>
<div class="t" style="left:993.0px;top:673.5px;color:#04123a;-webkit-text-stroke:0.35px #04123a;">Save</div>
<div class="pill" style="left:1063.4px;top:623.6px;width:206.4px;height:21.4px"></div>
<div class="circ" style="left:1067.3px;top:624.4px;width:26.6px;height:18.8px;background:#f0e41c"></div><div class="num" style="left:1067.6px;top:625.2px;color:#000">2</div>
<svg class="abs" style="left:1090px;top:622px" width="44" height="26" viewBox="0 0 44 26"><path d="M6 20.8 H19.6 L27 4.8 H37.4" fill="none" stroke="#ececec" stroke-width="1.9"/></svg>
<div class="t" style="left:1130.6px;top:627.0px;color:#e4e4e4;">4.<span class="z">0</span><span class="z">0</span>V</div>
</body></html>
